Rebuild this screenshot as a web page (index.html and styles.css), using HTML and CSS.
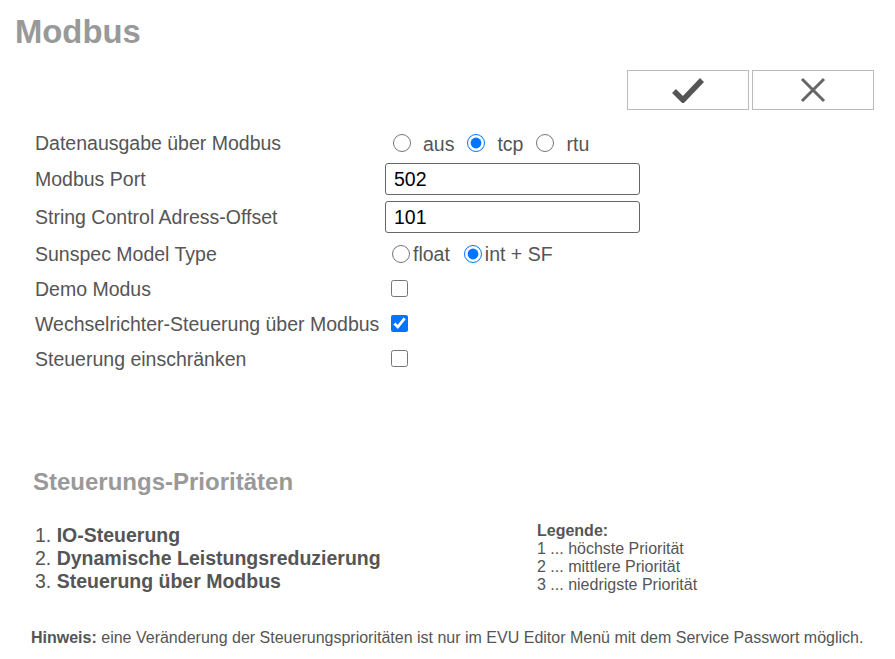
FILE: index.html
```html
<!DOCTYPE html>
<html lang="de">
<head>
<meta charset="utf-8">
<title>Modbus</title>
<link rel="stylesheet" href="styles.css">
</head>
<body>
<h1 class="title">Modbus</h1>
<div class="actions">
  <button class="btn" type="button" aria-label="Speichern">
    <svg width="34" height="26" viewBox="0 0 34 26"><path d="M3 14 L12 23 L31 3" fill="none" stroke="#555" stroke-width="5.5" stroke-linejoin="miter"/></svg>
  </button>
  <button class="btn" type="button" aria-label="Abbrechen">
    <svg width="26" height="26" viewBox="0 0 26 26"><path d="M2 2 L24 24 M24 2 L2 24" fill="none" stroke="#666" stroke-width="3"/></svg>
  </button>
</div>
<form class="form">
  <div class="label">Datenausgabe über Modbus</div>
  <div class="ctrl radios">
    <label class="opt"><input type="radio" name="out"> aus</label>
    <label class="opt"><input type="radio" name="out" checked> tcp</label>
    <label class="opt"><input type="radio" name="out"> rtu</label>
  </div>
  <div class="label">Modbus Port</div>
  <div class="ctrl"><input class="text" type="text" value="502"></div>
  <div class="label">String Control Adress-Offset</div>
  <div class="ctrl"><input class="text" type="text" value="101"></div>
  <div class="label">Sunspec Model Type</div>
  <div class="ctrl radios tight">
    <label class="opt"><input type="radio" name="ss">float</label>
    <label class="opt"><input type="radio" name="ss" checked>int + SF</label>
  </div>
  <div class="label">Demo Modus</div>
  <div class="ctrl"><input class="check" type="checkbox"></div>
  <div class="label">Wechselrichter-Steuerung über Modbus</div>
  <div class="ctrl"><input class="check" type="checkbox" checked></div>
  <div class="label">Steuerung einschränken</div>
  <div class="ctrl"><input class="check" type="checkbox"></div>
</form>
<h2 class="subtitle">Steuerungs-Prioritäten</h2>
<div class="prio">
  <ol class="prio-list">
    <li>1. <b>IO-Steuerung</b></li>
    <li>2. <b>Dynamische Leistungsreduzierung</b></li>
    <li>3. <b>Steuerung über Modbus</b></li>
  </ol>
  <div class="legend">
    <b>Legende:</b><br>
    1 ... höchste Priorität<br>
    2 ... mittlere Priorität<br>
    3 ... niedrigste Priorität
  </div>
</div>
<p class="note"><b>Hinweis:</b> eine Veränderung der Steuerungsprioritäten ist nur im EVU Editor Menü mit dem Service Passwort möglich.</p>
</body>
</html>
```
FILE: styles.css
```css
* { box-sizing: border-box; }
body {
  margin: 0;
  font-family: "Liberation Sans", Arial, sans-serif;
  color: #555;
  background: #fff;
}
.title {
  margin: 0;
  padding: 13px 0 0 15px;
  font-size: 32.8px;
  line-height: 37px;
  color: #999;
  font-weight: bold;
}
.actions {
  display: flex;
  justify-content: flex-end;
  gap: 3px;
  padding: 20px 21px 0 0;
}
.btn {
  width: 122px;
  height: 40px;
  border: 1px solid #bbb;
  background: #fff;
  display: flex;
  align-items: center;
  justify-content: center;
  padding: 0;
  margin: 0;
}
.form {
  display: grid;
  grid-template-columns: 350px 255px;
  row-gap: 6px;
  margin: 18px 0 0 35px;
  font-size: 19.5px;
}
.label {
  min-height: 29px;
  display: flex;
  align-items: center;
  padding-top: 1px;
}
.ctrl {
  display: flex;
  align-items: center;
  min-height: 29px;
}
.opt {
  display: flex;
  align-items: center;
  margin-right: 5px;
  padding-top: 4px;
}
.opt input {
  width: 18px;
  height: 18px;
  margin: -4px 12px 0 8px;
}
.tight .opt { margin-right: 7px; padding-top: 2px; }
.tight .opt input { margin: -2px 3px 0 7px; }
.text {
  width: 255px;
  height: 32px;
  border: 1px solid #666;
  border-radius: 3px;
  padding: 0 8px;
  font-family: "Liberation Sans", Arial, sans-serif;
  font-size: 19.5px;
  color: #000;
}
.check {
  width: 17px;
  height: 17px;
  margin: 0 0 0 6px;
}
.subtitle {
  margin: 95px 0 0 33px;
  font-size: 24px;
  line-height: 28px;
  color: #999;
  font-weight: bold;
}
.prio {
  display: flex;
  margin: 26px 0 0 35px;
}
.prio-list {
  list-style: none;
  margin: 0;
  padding: 2px 0 0;
  width: 502px;
  font-size: 19.5px;
  line-height: 23px;
}
.legend {
  font-size: 16px;
  line-height: 18px;
}
.note {
  margin: 35px 0 0 31px;
  font-size: 16px;
}
```
